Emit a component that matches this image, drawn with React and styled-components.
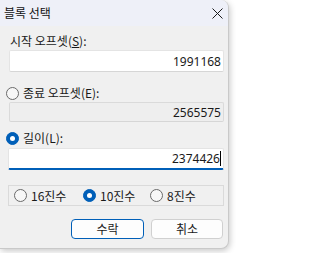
import React from 'react';
import styled, { createGlobalStyle } from 'styled-components';

const GlobalStyle = createGlobalStyle`
  html, body {
    margin: 0;
    padding: 0;
    background: #ffffff;
  }
  body {
    font-family: "Noto Sans", "Noto Sans CJK KR", sans-serif;
    font-size: 12px;
    color: #1a1a1a;
  }
`;

const Page = styled.div`
  width: 236px;
  height: 253px;
  overflow: hidden;
`;

const Window = styled.div`
  width: 229px;
  height: 249px;
  box-sizing: border-box;
  background: #f0f0f0;
  border-right: 1px solid #c9c9c9;
  border-bottom: 1px solid #c9c9c9;
  border-radius: 0 8px 8px 0;
  box-shadow: 1px 2px 6px rgba(0, 0, 0, 0.22);
  overflow: hidden;
  display: flex;
  flex-direction: column;
`;

const TitleBar = styled.div`
  height: 26px;
  flex: none;
  background: #eef0f8;
  display: flex;
  align-items: center;
  justify-content: space-between;
  padding: 0 5px 0 4px;
`;

const Title = styled.span`
  font-family: "Noto Sans CJK KR", sans-serif;
  font-size: 12px;
  line-height: 16px;
  color: #111;
`;

const CloseIcon = styled.svg`
  width: 11px;
  height: 11px;
  margin-right: 0;
`;

const Body = styled.div`
  display: flex;
  flex-direction: column;
  padding: 7px 4px 0 9px;
`;

const FieldLabel = styled.div`
  font-family: "Noto Sans CJK KR", sans-serif;
  line-height: 16px;
  height: 16px;
  margin-left: 1px;
`;

const TextBox = styled.div`
  box-sizing: border-box;
  height: ${p => p.$h}px;
  margin-top: ${p => p.$mt}px;
  margin-left: ${p => (p.$focused ? -1 : 0)}px;
  background: ${p => (p.$disabled ? '#eeeeee' : '#ffffff')};
  border: 1px solid ${p => (p.$disabled ? '#dadada' : '#e4e4e4')};
  border-bottom: ${p => (p.$focused ? '2px solid #005fb8' : '1px solid #d6d6d6')};
  border-radius: 2px;
  display: flex;
  align-items: center;
  justify-content: flex-end;
  padding-right: 2px;
  font-family: "Noto Sans", sans-serif;
  font-size: 12px;
  color: #1a1a1a;
`;

const Caret = styled.span`
  display: inline-block;
  width: 1px;
  height: 15px;
  background: #000;
  margin-left: 0;
`;

const RadioRow = styled.label`
  display: flex;
  align-items: center;
  gap: 4px;
  height: 16px;
  margin-top: ${p => p.$mt}px;
  margin-left: ${p => p.$ml || 0}px;
  font-family: "Noto Sans CJK KR", "Noto Sans", sans-serif;
  line-height: 16px;
`;

const RadioDot = styled.span`
  box-sizing: border-box;
  width: 13px;
  height: 13px;
  flex: none;
  border-radius: 50%;
  border: 1px solid ${p => (p.$checked ? '#005fb8' : '#6a6a6a')};
  background: ${p => (p.$checked ? '#005fb8' : '#f7f7f7')};
  display: flex;
  align-items: center;
  justify-content: center;

  &::after {
    content: '';
    display: ${p => (p.$checked ? 'block' : 'none')};
    width: 5px;
    height: 5px;
    border-radius: 50%;
    background: #ffffff;
  }
`;

const GroupBox = styled.div`
  box-sizing: border-box;
  height: 21px;
  margin: 15px 0 0 -1px;
  border: 1px solid #dadada;
  display: grid;
  grid-template-columns: 69px 67px auto;
  align-items: center;
  padding-left: 5px;
`;

const ButtonRow = styled.div`
  display: flex;
  justify-content: flex-end;
  gap: 7px;
  margin-top: 13px;
  padding-right: 1px;
`;

const Button = styled.button`
  box-sizing: border-box;
  width: ${p => p.$w}px;
  height: 20px;
  padding: 0;
  background: #fdfdfd;
  border: ${p => (p.$default ? '1.5px solid #005fb8' : '1px solid #d0d0d0')};
  border-radius: 4px;
  font-family: "Noto Sans CJK KR", sans-serif;
  font-size: 12px;
  line-height: 16px;
  color: #1a1a1a;
`;

function Radio({ checked, children, mt, ml }) {
  return (
    <RadioRow $mt={mt} $ml={ml}>
      <RadioDot $checked={checked} />
      <span>{children}</span>
    </RadioRow>
  );
}

export default function App() {
  return (
    <Page>
      <GlobalStyle />
      <Window>
        <TitleBar>
          <Title>블록 선택</Title>
          <CloseIcon viewBox="0 0 11 11">
            <path d="M0.5 0.5 L10.5 10.5 M10.5 0.5 L0.5 10.5" stroke="#1a1a1a" strokeWidth="1" fill="none" />
          </CloseIcon>
        </TitleBar>
        <Body>
          <FieldLabel>시작 오프셋(<u>S</u>):</FieldLabel>
          <TextBox $h={22} $mt={1}>1991168</TextBox>

          <Radio mt={13} ml={-3}>종료 오프셋(E):</Radio>
          <TextBox $h={20} $mt={1} $disabled>2565575</TextBox>

          <Radio checked mt={8} ml={-3}>길이(L):</Radio>
          <TextBox $h={22} $mt={2} $focused>2374426<Caret /></TextBox>

          <GroupBox>
            <Radio>16진수</Radio>
            <Radio checked>10진수</Radio>
            <Radio>8진수</Radio>
          </GroupBox>

          <ButtonRow>
            <Button $w={73} $default>수락</Button>
            <Button $w={72}>취소</Button>
          </ButtonRow>
        </Body>
      </Window>
    </Page>
  );
}
